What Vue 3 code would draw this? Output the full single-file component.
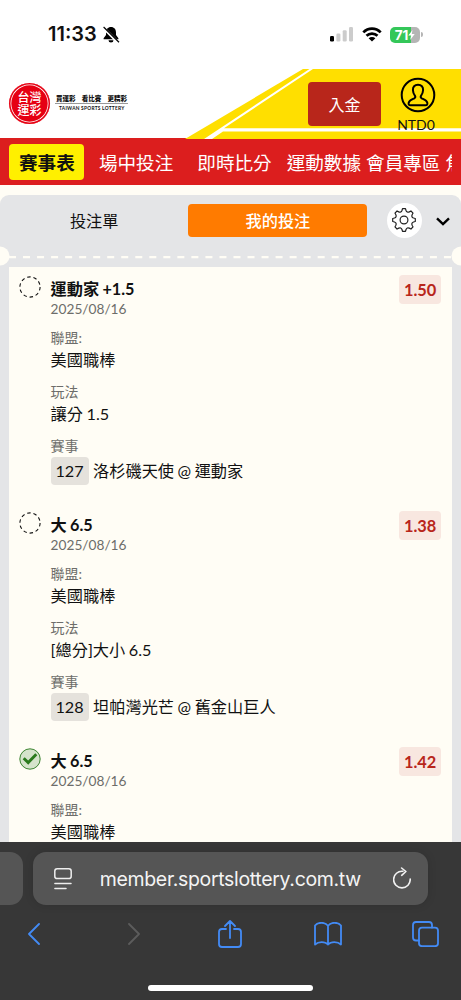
<template>
    <div class="phone">
        <div class="status_bar">
            <div class="clock">
                <span class="time">11:33</span>
                <svg class="bell" viewBox="0 0 18 18">
                    <path d="M9 1C5.8 1 4 3.3 4 6.4V9L1.6 12.2V13.2H16.4V12.2L14 9V6.4C14 3.3 12.200 1 9 1ZM6.500 14.300a2.500 2.300 0 0 0 5 0Z" fill="#000" />
                    <path d="M.8 1.200L16.600 17" stroke="#fff" stroke-width="2.800" />
                    <path d="M1.600 1L17 16.300" stroke="#000" stroke-width="1.200" />
                </svg>
            </div>
            <div class="status_icons">
                <svg class="signal" viewBox="0 0 23 15">
                    <rect x="0" y="9" width="4" height="5.500" rx="1.200" fill="#000" />
                    <rect x="6.400" y="6.500" width="4" height="8" rx="1.200" fill="#ccc" />
                    <rect x="12.700" y="3.200" width="4" height="11.300" rx="1.200" fill="#ccc" />
                    <rect x="19" y="0" width="4" height="14.500" rx="1.200" fill="#ccc" />
                </svg>
                <svg class="wifi" viewBox="0 0 20 15">
                    <path d="M1.300 5.400C6.200.4 13.800.4 18.700 5.400M4.500 8.800C7.500 5.800 12.500 5.800 15.500 8.800" fill="none" stroke="#000" stroke-width="2.700" />
                    <path d="M10 14.500L6.600 11.200C8.500 9.500 11.500 9.500 13.400 11.200Z" fill="#000" />
                </svg>
                <div class="battery">
                    <span>71</span>
                    <svg viewBox="0 0 7 10"><path d="M4.500 0L.3 5.600H3L2.200 10L6.700 4H3.800Z" fill="#fff" /></svg>
                </div>
                <i class="battery_cap"></i>
            </div>
        </div>

        <header class="site_header">
            <svg class="header_bg" viewBox="0 0 461 70">
                <path d="M185 70L303 0H461V70Z" fill="#ffdf00" />
                <path d="M204 70L309.500 0H313L224 59.200H461V62.500H223L212 70Z" fill="#fff" />
            </svg>
            <div class="brand">
                <div class="seal">
                    <span>台灣</span>
                    <span>運彩</span>
                </div>
                <div class="slogan">
                    <div class="slogan_zh">
                        <span>買運彩</span><span>看比賽</span><span>更精彩</span>
                    </div>
                    <div class="slogan_en">TAIWAN SPORTS LOTTERY</div>
                </div>
            </div>
            <div class="account">
                <button class="deposit">入金</button>
                <div class="user">
                    <svg viewBox="0 0 36 36">
                        <circle cx="18" cy="18" r="16.300" fill="none" stroke="#000" stroke-width="2" />
                        <path d="M18 7.800C14.500 7.800 12.800 10 12.900 13C13 15.800 13.900 17.400 15 18.800C15.500 19.700 15.300 20.700 14.300 21.300C11.400 22.700 9.300 23.300 8.700 25.700C8.300 27.600 9 28.300 10.500 28.300H25.500C27 28.300 27.700 27.600 27.300 25.700C26.700 23.300 24.600 22.700 21.700 21.300C20.700 20.700 20.500 19.700 21 18.800C22.100 17.400 23 15.800 23.100 13C23.200 10 21.500 7.800 18 7.800Z" fill="none" stroke="#000" stroke-width="2" />
                    </svg>
                    <span>NTD0</span>
                </div>
            </div>
        </header>

        <nav class="main_nav">
            <div class="nav_scroll">
                <a v-for="item in nav_items" :key="item.name" :class="item.kind">{{ item.name }}</a>
            </div>
        </nav>

        <main class="bet_panel">
            <div class="tabs">
                <div class="tab">投注單</div>
                <div class="tab tab_active">我的投注</div>
                <div class="settings">
                    <svg viewBox="0 0 24 24" fill="none" stroke="#222" stroke-width="1.200" stroke-linejoin="round">
                        <path :d="gear_path" />
                        <circle cx="12" cy="12" r="3.900" />
                    </svg>
                </div>
                <svg class="chevron" viewBox="0 0 14 9"><path d="M1 1.300L7 7L13 1.300" fill="none" stroke="#000" stroke-width="2.400" /></svg>
            </div>
            <div class="tear_line">
                <svg viewBox="0 0 461 20">
                    <circle cx="0" cy="10" r="9.500" fill="#fffdf5" />
                    <circle cx="461" cy="10" r="9.500" fill="#fffdf5" />
                    <path d="M9 11.200H452" stroke="#fffdf5" stroke-width="2.200" stroke-dasharray="7 7.030" />
                </svg>
            </div>
            <div class="bet_list">
                <div v-for="(bet, i) in bets" :key="i" class="bet">
                    <svg class="bet_state" viewBox="0 0 22 22" fill="none">
                        <template v-if="bet.won">
                            <circle cx="11" cy="11" r="10.200" fill="#d5e3cb" stroke="#3c8430" stroke-width="1" />
                            <path d="M4.700 10.200L9.200 14.600L17.300 6.300" stroke="#2a7a1c" stroke-width="2.900" />
                        </template>
                        <circle v-else cx="11" cy="11" r="10.100" stroke="#111" stroke-width="1.100" stroke-dasharray="3.500 2.846" />
                    </svg>
                    <div class="bet_info">
                        <div class="bet_title">{{ bet.title }}</div>
                        <div class="bet_date">2025/08/16</div>
                        <div class="label">聯盟:</div>
                        <div class="value">美國職棒</div>
                        <div class="label">玩法</div>
                        <div class="value">{{ bet.play }}</div>
                        <div class="label">賽事</div>
                        <div class="match"><span class="match_no">{{ bet.no }}</span>{{ bet.match }}</div>
                    </div>
                    <div class="odds">{{ bet.odds }}</div>
                </div>
            </div>
        </main>

        <footer class="browser_bar">
            <div class="address_row">
                <div class="prev_tab"></div>
                <div class="address">
                    <svg class="page_icon" viewBox="0 0 18 22" fill="none" stroke="#eee" stroke-width="1.500" stroke-linecap="round">
                        <rect x=".8" y=".8" width="16.400" height="9.800" rx="2.400" />
                        <path d="M.9 15.400H17M.9 20.600H12" />
                    </svg>
                    <span class="url">member.sportslottery.com.tw</span>
                    <svg class="reload" viewBox="0 0 18 22" fill="none" stroke="#f2f2f2" stroke-width="1.600" stroke-linecap="round" stroke-linejoin="round">
                        <path d="M9.800 4.300A8.300 8.300 0 1 0 17.200 12M8.600 1L12.900 4.500L8.700 8.300" />
                    </svg>
                </div>
            </div>
            <div class="toolbar">
                <svg class="back" viewBox="0 0 12 22"><path d="M11 1L1 11L11 21" /></svg>
                <svg class="forward" viewBox="0 0 12 22"><path d="M1 1L11 11L1 21" /></svg>
                <svg class="share" viewBox="0 0 24 28"><path d="M8 9H4Q1 9 1 12V24Q1 27 4 27H20Q23 27 23 24V12Q23 9 20 9H16M12 18V1M7 6L12 1L17 6" /></svg>
                <svg class="book" viewBox="0 0 28 24"><path d="M14 4V22.500M14 4C11.500-.2 4-.2 1 3.500V22.500C4.500 19.200 11 19.200 14 22.500C17 19.200 23.500 19.200 27 22.500V3.500C24-.2 16.500-.2 14 4Z" /></svg>
                <svg class="tabs_icon" viewBox="0 0 27 26"><path d="M6.800 19.500H4Q1 19.500 1 16.500V4Q1 1 4 1H17Q20 1 20 4V6.500" /><rect x="7" y="6.700" width="19" height="18.500" rx="3" /></svg>
            </div>
            <div class="home_indicator"></div>
        </footer>
    </div>
</template>

<script setup>
const nav_items = [
    { name: '賽事表', kind: 'current' },
    { name: '場中投注', kind: 'live' },
    { name: '即時比分', kind: 'score' },
    { name: '運動數據', kind: 'stats' },
    { name: '會員專區', kind: 'member' },
    { name: '焦點', kind: 'focus' },
]

const bets = [
    { title: '運動家 +1.5', play: '讓分 1.5', no: '127', match: '洛杉磯天使 @ 運動家', odds: '1.50' },
    { title: '大 6.5', play: '[總分]大小 6.5', no: '128', match: '坦帕灣光芒 @ 舊金山巨人', odds: '1.38' },
    { title: '大 6.5', play: '', no: '', match: '', odds: '1.42', won: true },
]

// eight teeth around the hub, with a rounded notch after each one
const polar = (a, r) => `${(12 + r * Math.sin(a)).toFixed(2)} ${(12 - r * Math.cos(a)).toFixed(2)}`
let gear_path = `M${polar(-0.13, 11.4)}`
for (let i = 0; i < 8; i++) {
    const a = (i * Math.PI) / 4
    gear_path += `L${polar(a + 0.13, 11.4)}L${polar(a + 0.21, 9.7)}`
    gear_path += `Q${polar(a + Math.PI / 8, 7.7)} ${polar(a + Math.PI / 4 - 0.21, 9.7)}`
    gear_path += `L${polar(a + Math.PI / 4 - 0.13, 11.4)}`
}
gear_path += 'Z'
</script>

<style>
body {
    margin: 0;
    overflow: hidden;
}
</style>

<style scoped>
.phone {
    width: 461px;
    height: 1000px;
    display: flex;
    flex-direction: column;
    overflow: hidden;
    background: #fffdf5;
    font-family: Lato, "Noto Sans CJK TC", sans-serif;
    color: #111;
}
svg {
    display: block;
    flex: none;
}
.status_bar {
    height: 69px;
    flex: none;
    box-sizing: border-box;
    display: flex;
    justify-content: space-between;
    padding: 22px 38px 0 48px;
    background: #fff;
}
.clock, .status_icons {
    display: flex;
    align-items: center;
    height: 25px;
}
.time {
    font: 600 20px/25px Inter, sans-serif;
    width: 53px;
    white-space: nowrap;
}
.bell {
    width: 18px;
    height: 18px;
    margin-left: 1px;
}
.signal {
    width: 23px;
    height: 15px;
    margin-right: 9px;
}
.wifi {
    width: 20px;
    height: 15px;
    margin-right: 8px;
}
.battery {
    width: 30px;
    height: 16px;
    border-radius: 5px;
    background: linear-gradient(90deg, #34c759 71%, #b5b5b5 71%);
    display: flex;
    align-items: center;
    justify-content: center;
    color: #fff;
    font: 700 13.500px/16px Inter, sans-serif;
    letter-spacing: -0.2px;
}
.battery svg {
    width: 7px;
    height: 10px;
}
.battery_cap {
    width: 2px;
    height: 5px;
    margin-left: 1px;
    border-radius: 0 2px 2px 0;
    background: #b5b5b5;
}
.site_header {
    position: relative;
    height: 69.400px;
    flex: none;
    display: flex;
    justify-content: space-between;
    background: #fff;
}
.header_bg {
    position: absolute;
    inset: 0;
    width: 461px;
    height: 70px;
}
.brand, .account {
    position: relative;
    display: flex;
}
.brand {
    padding: 14px 0 0 9px;
}
.seal {
    box-sizing: border-box;
    width: 41px;
    height: 41px;
    border-radius: 50%;
    background: #e60012;
    box-shadow: inset 0 0 0 1.500px #e60012, inset 0 0 0 2.300px #fff;
    color: #fff;
    display: flex;
    flex-direction: column;
    align-items: center;
    padding-top: 8px;
    font: 500 12px/12.500px "Noto Sans CJK TC", sans-serif;
}
.slogan {
    margin: 9.500px 0 0 5px;
    width: 73px;
}
.slogan_zh {
    display: flex;
    justify-content: space-between;
    padding: 0 1px;
    font: 900 6.500px/10px "Noto Sans CJK TC", sans-serif;
    border-bottom: 1px solid #999;
}
.slogan_en {
    font: 700 4.800px/8px Lato, sans-serif;
    letter-spacing: 0.26px;
    padding-left: 4px;
    white-space: nowrap;
}
.account {
    padding-right: 23px;
}
.deposit {
    margin: 13px 16px 0 0;
    width: 73px;
    height: 44px;
    padding: 0;
    border: 0;
    border-radius: 4px;
    background: #b8261b;
    color: #fff;
    font: 400 16px/44px "Noto Sans CJK TC", sans-serif;
}
.user {
    width: 41px;
    display: flex;
    flex-direction: column;
    align-items: center;
    padding-top: 8px;
}
.user svg {
    width: 36px;
    height: 36px;
}
.user span {
    font-size: 14px;
    line-height: 20px;
    margin: 2px 0 0 -3px;
}
.main_nav {
    height: 47px;
    flex: none;
    box-sizing: border-box;
    padding: 5.500px 9px 0 9.400px;
    background: #dc1e1e;
}
.nav_scroll {
    display: flex;
    overflow: hidden;
    white-space: nowrap;
    color: #fff;
    font: 400 18.600px/35px "Noto Sans CJK TC", sans-serif;
}
.current {
    width: 75px;
    height: 36px;
    flex: none;
    border-radius: 4px;
    background: #fff000;
    color: #111;
    font-weight: 700;
    text-align: center;
}
.live {
    margin-left: 14.500px;
}
.score {
    margin-left: 24px;
}
.stats {
    margin-left: 15px;
}
.member {
    margin-left: 5px;
}
.focus {
    margin-left: 5px;
}
.bet_panel {
    margin-top: 9.600px;
    flex: 1;
    min-height: 0;
    overflow: hidden;
    background: #e4e5e7;
    border-radius: 9px 9px 0 0;
}
.tabs {
    height: 51px;
    display: flex;
    align-items: center;
    font: 400 16.200px/33px "Noto Sans CJK TC", sans-serif;
}
.tab {
    width: 188.400px;
    text-align: center;
}
.tab_active {
    width: 179px;
    border-radius: 4px;
    background: #ff7b00;
    color: #fff;
    font-weight: 500;
}
.settings {
    width: 35px;
    height: 35px;
    margin-left: 19.500px;
    border-radius: 50%;
    background: #fff;
    display: flex;
    align-items: center;
    justify-content: center;
}
.settings svg {
    width: 24px;
    height: 24px;
}
.chevron {
    width: 14px;
    height: 9px;
    margin: 2px 0 0 14px;
}
.tear_line svg {
    width: 461px;
    height: 20px;
}
.bet_list {
    margin: 1.300px 9.400px 0;
    background: #fffdf5;
}
.bet {
    height: 236px;
    box-sizing: border-box;
    padding: 10.400px 10.500px 0 10px;
    display: flex;
    align-items: flex-start;
}
.bet_state {
    width: 22px;
    height: 22px;
    margin-top: -1.700px;
}
.bet_info {
    flex: 1;
    margin-left: 9.200px;
}
.bet_title, .value, .match {
    font-size: 16.200px;
    line-height: 22px;
    height: 22px;
    white-space: nowrap;
    word-spacing: -0.6px;
}
.bet_title {
    font-weight: 700;
    height: 21px;
}
.bet_date, .label {
    font-size: 14px;
    line-height: 20px;
    height: 20px;
    color: #6d6d6a;
}
.bet_date {
    font-size: 13.700px;
}
.label {
    line-height: 21px;
    height: 22px;
    margin-top: 10px;
}
.bet_date + .label {
    margin-top: 8px;
}
.match {
    height: 28px;
    display: flex;
    line-height: 27px;
}
.match_no {
    width: 38px;
    margin-right: 4.500px;
    border-radius: 4px;
    background: #e5e2dc;
    text-align: center;
}
.odds {
    width: 42px;
    height: 29px;
    margin-top: -3px;
    border-radius: 4px;
    background: #f8e7e0;
    color: #b8261b;
    text-align: center;
    font-size: 16.400px;
    font-weight: 700;
    line-height: 29px;
}
.browser_bar {
    height: 157.600px;
    flex: none;
    background: #373737;
}
.address_row {
    display: flex;
    padding-top: 9.600px;
}
.prev_tab {
    width: 23px;
    height: 53px;
    border-radius: 0 13px 13px 0;
    background: #555;
}
.address {
    width: 395px;
    height: 53px;
    box-sizing: border-box;
    margin-left: 10px;
    padding: 0 17px 0 20.500px;
    border-radius: 13px;
    background: #555;
    box-shadow: 0 0 10px rgba(0, 0, 0, 0.12);
    display: flex;
    align-items: center;
    justify-content: space-between;
    color: #f4f4f4;
    font: 400 19.500px/54px Inter, sans-serif;
    letter-spacing: -0.33px;
}
.url {
    margin-right: 4px;
}
.page_icon, .reload {
    width: 18px;
    height: 22px;
}
.reload {
    margin-top: -2px;
}
.toolbar {
    display: flex;
    align-items: center;
    height: 58px;
    padding-left: 28px;
}
.toolbar svg {
    fill: none;
    stroke: #438bf5;
    stroke-width: 1.800;
    stroke-linecap: round;
    stroke-linejoin: round;
}
.back, .forward {
    width: 12px;
    height: 22px;
}
.toolbar .forward {
    margin-left: 88px;
    stroke: #5c5c5c;
}
.share {
    width: 24px;
    height: 28px;
    margin: -1px 0 0 78px;
}
.book {
    width: 28px;
    height: 24px;
    margin-left: 72px;
}
.tabs_icon {
    width: 27px;
    height: 26px;
    margin-left: 70px;
}
.home_indicator {
    width: 165px;
    height: 6px;
    margin: 21.500px auto 0;
    border-radius: 3px;
    background: #fff;
}
</style>
